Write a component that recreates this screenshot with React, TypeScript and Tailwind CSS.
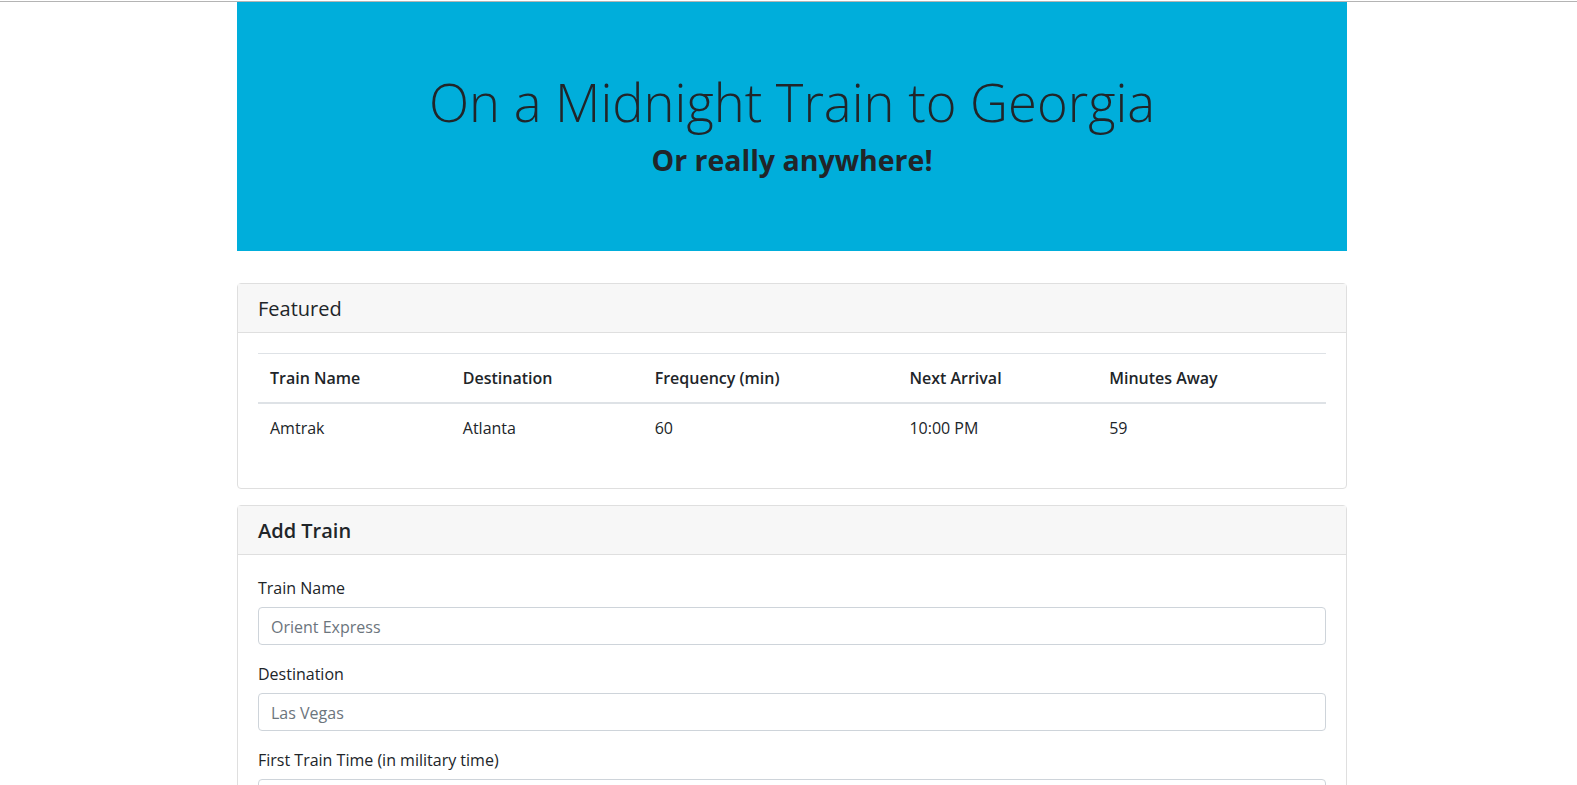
const font = "font-['Segoe_UI','Open_Sans','Noto_Sans',sans-serif]";

const trains = [
  { name: "Amtrak", destination: "Atlanta", frequency: "60", next: "10:00 PM", away: "59" },
];

const columns = [
  { label: "Train Name", width: "w-[193px]" },
  { label: "Destination", width: "w-[192px]" },
  { label: "Frequency (min)", width: "w-[255px]" },
  { label: "Next Arrival", width: "w-[200px]" },
  { label: "Minutes Away", width: "w-[229px]" },
];

function Field({ label, placeholder }: { label: string; placeholder: string }) {
  return (
    <div className="mb-4 flex flex-col">
      <label className="mb-[7px] pt-px text-base leading-6">{label}</label>
      <input
        type="text"
        placeholder={placeholder}
        className="h-[38px] w-full rounded border border-[#ced4da] px-3 pt-px text-base text-[#495057] placeholder:text-[#6c757d] outline-none"
      />
    </div>
  );
}

export default function App() {
  return (
    <div className={`${font} min-h-screen bg-white text-[#212529]`}>
      <div className="mt-px h-px bg-[#b4b4b4]" />
      <div className="ml-[237px] w-[1110px]">
        <header className="flex h-[249px] flex-col items-center bg-[#00aedb] pt-[66px]">
          <h1 className="mb-2 text-[52.5px] font-light leading-[67px]">On a Midnight Train to Georgia</h1>
          <h3 className="text-[28.5px] font-bold leading-[34px]">Or really anywhere!</h3>
        </header>

        <section className="mt-8 rounded border border-[#dfdfdf]">
          <div className="border-b border-[#dfdfdf] bg-[#f7f7f7] px-5 pt-[13px] pb-[11px]">
            <h5 className="text-xl font-medium leading-6">Featured</h5>
          </div>
          <div className="p-5">
            <table className="mb-4 w-full border-collapse text-left">
              <thead>
                <tr>
                  {columns.map((c) => (
                    <th
                      key={c.label}
                      className={`${c.width} border-t border-b-2 border-t-[#dee2e6] border-b-[#dee2e6] p-3 font-semibold leading-6`}
                    >
                      {c.label}
                    </th>
                  ))}
                </tr>
              </thead>
              <tbody>
                {trains.map((t) => (
                  <tr key={t.name}>
                    <td className="p-3 leading-6">{t.name}</td>
                    <td className="p-3 leading-6">{t.destination}</td>
                    <td className="p-3 leading-6">{t.frequency}</td>
                    <td className="p-3 leading-6">{t.next}</td>
                    <td className="p-3 leading-6">{t.away}</td>
                  </tr>
                ))}
              </tbody>
            </table>
          </div>
        </section>

        <section className="mt-4 rounded border border-[#dfdfdf]">
          <div className="border-b border-[#dfdfdf] bg-[#f7f7f7] px-5 pt-[13px] pb-[11px]">
            <h4 className="text-xl font-semibold leading-6">Add Train</h4>
          </div>
          <form className="p-5">
            <Field label="Train Name" placeholder="Orient Express" />
            <Field label="Destination" placeholder="Las Vegas" />
            <Field label="First Train Time (in military time)" placeholder="13:00" />
            <Field label="Frequency (min)" placeholder="60" />
          </form>
        </section>
      </div>
    </div>
  );
}
